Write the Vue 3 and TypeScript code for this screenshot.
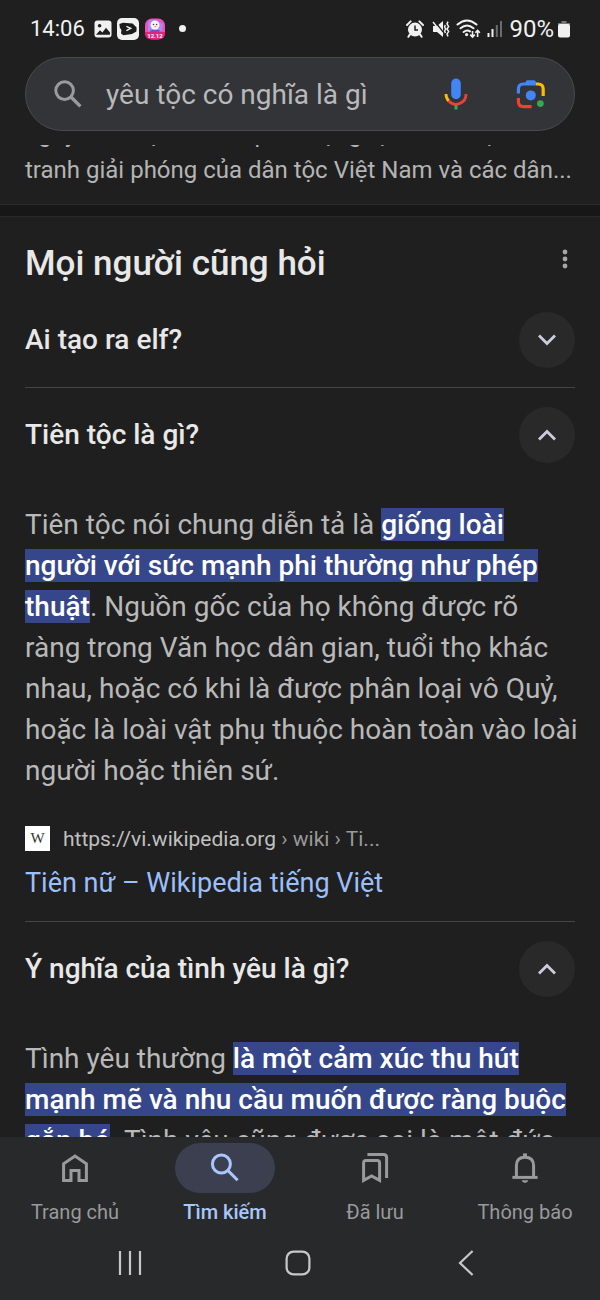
<script setup lang="ts">
import { ref } from 'vue'

interface Question {
  id: string
  title: string
  open: boolean
  before?: string
  highlight?: string
  after?: string
  source?: { host: string; path: string; label: string }
}

const query = ref('yêu tộc có nghĩa là gì')
const activeTab = ref('search')

const questions = ref<Question[]>([
  { id: 'elf', title: 'Ai tạo ra elf?', open: false },
  {
    id: 'tien-toc',
    title: 'Tiên tộc là gì?',
    open: true,
    before: 'Tiên tộc nói chung diễn tả là ',
    highlight: 'giống loài\nngười với sức mạnh phi thường như phép thuật',
    after:
      '. Nguồn gốc của họ không được rõ\nràng trong Văn học dân gian, tuổi thọ khác nhau, hoặc có khi là được phân loại vô Quỷ, hoặc là loài vật phụ thuộc hoàn toàn vào loài người hoặc thiên sứ.',
    source: {
      host: 'https://vi.wikipedia.org',
      path: ' › wiki › Ti...',
      label: 'Tiên nữ – Wikipedia tiếng Việt',
    },
  },
  {
    id: 'tinh-yeu',
    title: 'Ý nghĩa của tình yêu là gì?',
    open: true,
    before: 'Tình yêu thường ',
    highlight: 'là một cảm xúc thu hút mạnh mẽ và nhu cầu muốn được ràng buộc gắn bó',
    after: '. Tình yêu cũng được coi là một đức',
  },
])

const tabs = [
  { id: 'home', label: 'Trang chủ' },
  { id: 'search', label: 'Tìm kiếm' },
  { id: 'saved', label: 'Đã lưu' },
  { id: 'alerts', label: 'Thông báo' },
]
</script>

<template>
  <div class="screen">
    <header class="top">
      <div class="status">
        <div class="status-group">
          <span class="clock">14:06</span>
          <svg class="s-image" viewBox="0 0 18 18" aria-hidden="true">
            <rect x="0.5" y="0.5" width="17" height="17" rx="3" fill="#f1f1f1" />
            <circle cx="5.6" cy="5.8" r="1.8" fill="#1f1f1f" />
            <path d="M2 14.8 L6 10.2 L8.4 12.4 L12 7.8 L16 12.4 V14.8 Z" fill="#1f1f1f" />
          </svg>
          <svg class="s-app" viewBox="0 0 22 22" aria-hidden="true">
            <rect width="22" height="22" rx="5" fill="#f1f1f1" />
            <path d="M2.4 6 L6 4.8 L15.6 5.6 L19.6 9.4 L19.4 13.6 L15 16 L6.4 17.2 L4 15.4 L4.4 12 L2.8 9.6 Z" fill="#1c1c1c" />
            <path d="M9.4 8.4 L13.8 10.4 L9.4 12.6" fill="none" stroke="#f1f1f1" stroke-width="1.3" />
          </svg>
          <svg class="s-app" viewBox="0 0 22 22" aria-hidden="true">
            <rect x="1" y="0.5" width="20" height="21" rx="7" fill="#ef4fc0" />
            <path d="M4 4 Q7 1 11 2 T19 6 L18 13 H4 Z" fill="#a78df0" />
            <circle cx="11" cy="7" r="4.5" fill="#fbf3fb" />
            <circle cx="9.5" cy="6.5" r="0.8" fill="#463b70" />
            <circle cx="12.6" cy="6.5" r="0.8" fill="#463b70" />
            <path d="M10 8 L13 8 L11.4 9.5 Z" fill="#f39a32" />
            <path d="M6 12 H16 L15 14 H7 Z" fill="#6954c9" />
            <path d="M1 14 H21 V15 Q21 21.5 14 21.5 H8 Q1 21.5 1 15 Z" fill="#e3227f" />
            <text x="11" y="20" text-anchor="middle" font-size="6" font-weight="700" fill="#ffffff">12.12</text>
          </svg>
          <span class="dot"></span>
        </div>
        <div class="status-group right">
          <svg class="s-alarm" viewBox="0 0 18 18" aria-hidden="true">
            <circle cx="9" cy="9.6" r="7" fill="#f1f1f1" />
            <path d="M1 5 L4.6 1.4 M17 5 L13.4 1.4 M3.8 14.6 L2.4 16.8 M14.2 14.6 L15.6 16.8" stroke="#f1f1f1" stroke-width="2" stroke-linecap="round" />
            <path d="M9 5.6 V10 H12" fill="none" stroke="#1f1f1f" stroke-width="1.5" />
          </svg>
          <svg class="s-mute" viewBox="0 0 18 18" aria-hidden="true">
            <path d="M1 6 H5 L11 1 V17 L5 12 H1 Z" fill="#f1f1f1" />
            <path d="M2.4 1 L12.4 13.6" stroke="#1f1f1f" stroke-width="1.4" />
            <path d="M1 2 L11 14.6" stroke="#f1f1f1" stroke-width="1.5" />
            <path d="M13.2 5 L12.6 7 L13.6 9 L12.6 11 L13.4 13 M16 1.6 L15 4 L16.6 6.4 L15 9 L16.6 11.6 L15 14 L16 16.4" fill="none" stroke="#f1f1f1" stroke-width="1.5" />
          </svg>
          <svg class="s-wifi" viewBox="0 0 25 20" aria-hidden="true">
            <g fill="none" stroke="#f1f1f1" stroke-width="2" stroke-linecap="round">
              <path d="M1.5 5.5 Q11 -2.5 20.5 5.5" />
              <path d="M4.5 9.3 Q11 3.7 17.5 9.3" />
              <path d="M7.6 13 Q11 10.2 14 12.4" />
            </g>
            <circle cx="10.6" cy="15.6" r="1.6" fill="#f1f1f1" />
            <path d="M16.5 12 V17.6 M14.2 15.6 L16.5 18 L18.8 15.6 M21.6 18 V11.6 M19.3 13.8 L21.6 11.4 L23.9 13.8" fill="none" stroke="#f1f1f1" stroke-width="1.6" />
          </svg>
          <svg class="s-signal" viewBox="0 0 16 18" aria-hidden="true">
            <rect x="0.5" y="13" width="2" height="4" fill="#f1f1f1" />
            <rect x="4.5" y="9" width="2" height="8" fill="#f1f1f1" />
            <rect x="8.8" y="5" width="2" height="12" fill="#6c6c6c" />
            <rect x="13" y="1" width="2" height="16" fill="#6c6c6c" />
          </svg>
          <span class="percent">90%</span>
          <svg class="s-battery" viewBox="0 0 12 18" aria-hidden="true">
            <path d="M3.5 1 H8.5 V3 H12 V5 H0 V3 H3.5 Z" fill="#777777" />
            <rect y="4" width="12" height="13.5" rx="2" fill="#f1f1f1" />
          </svg>
        </div>
      </div>

      <form class="search" @submit.prevent>
        <svg class="glass" viewBox="0 0 28 28" fill="none" stroke="#9b9b9b" aria-hidden="true">
          <circle cx="10.6" cy="10.6" r="8.8" stroke-width="3" />
          <path d="M17 17 L26.4 26.4" stroke-width="3.4" />
        </svg>
        <input v-model="query" type="text" aria-label="Tìm kiếm" />
        <button type="button" class="icon-button" aria-label="Tìm kiếm bằng giọng nói">
          <svg class="mic" viewBox="0 0 24 32" aria-hidden="true">
            <path d="M2 16 A10 10 0 0 0 4.7 23" fill="none" stroke="#fbbc04" stroke-width="2.8" />
            <path d="M4.7 23 A10 10 0 0 0 22 16" fill="none" stroke="#ea4335" stroke-width="2.8" />
            <path d="M12 27 V31.5" stroke="#34a853" stroke-width="3" />
            <rect x="7.2" y="0.6" width="9.6" height="20.6" rx="4.8" fill="#4285f4" />
          </svg>
        </button>
        <button type="button" class="icon-button" aria-label="Tìm kiếm bằng hình ảnh">
          <svg class="lens" viewBox="0 0 30 30" fill="none" aria-hidden="true">
            <path d="M2.4 14.5 V10 Q2.4 5 7.4 5 H20" stroke="#4285f4" stroke-width="3.2" />
            <path d="M8.5 5 L10.8 1.2 H18.8 L21.2 5 Z" fill="#4285f4" />
            <path d="M20 5 H22 Q27.2 5 27.2 10 V17" stroke="#fbbc04" stroke-width="3.2" />
            <path d="M2.4 19 V22.5 Q2.4 27.6 7.4 27.6 H15.6" stroke="#ea4335" stroke-width="3.2" />
            <circle cx="14.8" cy="16.4" r="5" fill="#4285f4" />
            <circle cx="24.4" cy="24.6" r="3.4" fill="#34a853" />
          </svg>
        </button>
      </form>
    </header>

    <main class="results">
      <p class="snippet">nguyên nhuận thành quan trọng vị thế mới lại đấu<br />tranh giải phóng của dân tộc Việt Nam và các dân...</p>

      <section class="related">
        <div class="heading">
          <h2>Mọi người cũng hỏi</h2>
          <button type="button" class="more" aria-label="Tùy chọn khác">
            <svg viewBox="0 0 6 20" fill="#a6a6a6" aria-hidden="true">
              <circle cx="3" cy="3" r="2.4" />
              <circle cx="3" cy="10" r="2.4" />
              <circle cx="3" cy="17" r="2.4" />
            </svg>
          </button>
        </div>

        <article v-for="q in questions" :key="q.id" class="item">
          <div class="question">
            <h3>{{ q.title }}</h3>
            <button type="button" class="toggle" :aria-expanded="q.open" :aria-label="q.title" @click="q.open = !q.open">
              <svg viewBox="0 0 20 12" fill="none" stroke="#ccccdc" stroke-width="2.8" aria-hidden="true">
                <path v-if="q.open" d="M2 10.4 L10 2.4 L18 10.4" />
                <path v-else d="M2 1.6 L10 9.6 L18 1.6" />
              </svg>
            </button>
          </div>
          <div v-if="q.open && q.before" class="answer">
            <p>{{ q.before }}<mark>{{ q.highlight }}</mark>{{ q.after }}</p>
            <template v-if="q.source">
              <div class="source">
                <span class="favicon">W</span>
                <span class="url">{{ q.source.host }}<span class="path">{{ q.source.path }}</span></span>
              </div>
              <a class="link" href="#">{{ q.source.label }}</a>
            </template>
          </div>
        </article>
      </section>
    </main>

    <footer class="bottom">
      <nav class="tabs">
        <button
          v-for="tab in tabs"
          :key="tab.id"
          type="button"
          class="tab"
          :class="{ active: tab.id === activeTab }"
          @click="activeTab = tab.id"
        >
          <span class="pill">
            <svg viewBox="0 0 32 32" fill="none" stroke="currentColor" stroke-width="3" aria-hidden="true">
              <path v-if="tab.id === 'home'" d="M4.6 28.6 V11.8 L16 4 L27.4 11.8 V28.6 H20 V18.6 H12 V28.6 Z" />
              <g v-else-if="tab.id === 'search'">
                <circle cx="12.4" cy="12" r="9" />
                <path d="M18.8 18.4 L28.6 28.2" />
              </g>
              <g v-else-if="tab.id === 'saved'">
                <path d="M4.6 28.4 V11 Q4.6 8.6 7 8.6 H18.2 Q20.6 8.6 20.6 11 V28.4 L12.6 24 Z" />
                <path d="M8.4 2.6 H24.6 Q27.6 2.6 27.6 5.6 V26" />
              </g>
              <g v-else>
                <path d="M3.4 25.4 H28.6" />
                <path d="M7.4 25.4 V13.6 Q7.4 5.2 16 5.2 Q24.6 5.2 24.6 13.6 V25.4" />
                <path d="M16 1.4 V5" stroke-width="4" />
                <path d="M12.6 28.2 H19.4 Q18.6 31 16 31 Q13.4 31 12.6 28.2 Z" fill="currentColor" stroke="none" />
              </g>
            </svg>
          </span>
          <span class="tab-label">{{ tab.label }}</span>
        </button>
      </nav>
      <div class="system">
        <button type="button" aria-label="Gần đây">
          <svg viewBox="0 0 28 28" fill="none" stroke="#c8c8c8" stroke-width="2.2" aria-hidden="true">
            <path d="M4 2 V26 M14 2 V26 M24 2 V26" />
          </svg>
        </button>
        <button type="button" aria-label="Màn hình chính">
          <svg viewBox="0 0 28 28" fill="none" stroke="#c8c8c8" stroke-width="2.2" aria-hidden="true">
            <rect x="2.6" y="2.6" width="22.8" height="22.8" rx="7" />
          </svg>
        </button>
        <button type="button" aria-label="Quay lại">
          <svg viewBox="0 0 28 28" fill="none" stroke="#c8c8c8" stroke-width="2.2" aria-hidden="true">
            <path d="M20.6 2 L8 14 L20.6 26" />
          </svg>
        </button>
      </div>
    </footer>
  </div>
</template>

<style>
body {
  background: #1f1f1f;
}
</style>

<style scoped>
.screen {
  display: flex;
  flex-direction: column;
  height: 100vh;
  overflow: hidden;
  background: #1f1f1f;
  color: #e8e8e8;
  font-family: Roboto, "Noto Sans", sans-serif;
}

button {
  display: flex;
  align-items: center;
  justify-content: center;
  padding: 0;
  border: 0;
  background: none;
  color: inherit;
  font: inherit;
}

.top {
  position: relative;
  z-index: 1;
  flex: none;
  padding-bottom: 14px;
  background: #1f1f1f;
}

.status {
  display: flex;
  align-items: center;
  justify-content: space-between;
  height: 57px;
  padding: 0 30px;
  color: #f1f1f1;
  font-size: 22px;
}

.status-group {
  display: flex;
  align-items: center;
  gap: 5px;
}

.clock {
  margin-right: 4px;
}

.s-image {
  width: 18px;
  height: 18px;
}

.s-app {
  width: 22px;
  height: 22px;
}

.dot {
  width: 7px;
  height: 7px;
  margin-left: 8px;
  border-radius: 50%;
  background: #f1f1f1;
}

.right {
  gap: 6px;
}

.s-alarm,
.s-mute {
  width: 18px;
  height: 18px;
}

.s-mute {
  margin-left: 2px;
}

.s-wifi {
  width: 25px;
  height: 20px;
}

.s-signal {
  width: 16px;
  height: 18px;
}

.s-battery {
  width: 12px;
  height: 18px;
}

.percent {
  margin-right: -2px;
  font-size: 24px;
}

.search {
  display: flex;
  align-items: center;
  height: 72px;
  margin: 0 25px;
  padding: 0 21px 0 28px;
  border: 1px solid #4a4a4c;
  border-radius: 38px;
  background: #333438;
}

.glass {
  flex: none;
  width: 28px;
  height: 28px;
}

.search input {
  flex: 1;
  min-width: 0;
  padding: 0 0 0 24px;
  border: 0;
  outline: 0;
  background: none;
  color: #b9b9bb;
  font: inherit;
  font-size: 28px;
}

.icon-button {
  width: 44px;
  height: 44px;
}

.icon-button + .icon-button {
  margin-left: 31px;
}

.mic {
  width: 24px;
  height: 32px;
}

.lens {
  width: 30px;
  height: 30px;
}

.results {
  flex: 1;
  min-height: 0;
  margin-top: -29px;
  overflow: hidden;
}

.snippet {
  margin: 0;
  padding: 0 25px 17px;
  color: #b4b4b4;
  font-size: 24px;
  line-height: 36px;
  white-space: nowrap;
}

.related {
  padding: 24px 25px 0;
  border-top: 11px solid #171717;
  box-shadow: 0 -1px #2b2b2b, inset 0 1px #292929;
}

.heading {
  display: flex;
  justify-content: space-between;
}

h2,
h3 {
  margin: 0;
  font-weight: 500;
}

h2 {
  font-size: 35px;
  line-height: 48px;
}

.more {
  width: 20px;
  height: 38px;
}

.more svg {
  width: 6px;
  height: 20px;
}

.heading + .item {
  padding-top: 5px;
}

.item + .item {
  border-top: 1px solid #444444;
}

.question {
  display: flex;
  align-items: center;
  justify-content: space-between;
  padding: 19px 0;
}

h3 {
  font-size: 28px;
  line-height: 40px;
}

.toggle {
  flex: none;
  width: 56px;
  height: 56px;
  border-radius: 50%;
  background: #292929;
}

.toggle svg {
  width: 20px;
  height: 12px;
}

.answer {
  margin-right: -10px;
  padding: 22px 0 18px;
}

.answer p {
  margin: 0 0 35px;
  color: #b9b9b9;
  font-size: 28px;
  line-height: 41px;
  white-space: pre-line;
}

mark {
  background: #35478a;
  color: #ffffff;
  font-weight: 500;
}

.source {
  display: flex;
  align-items: center;
  gap: 13px;
}

.favicon {
  width: 25px;
  background: #ffffff;
  color: #333333;
  font-family: "Liberation Serif", serif;
  font-size: 15px;
  line-height: 25px;
  text-align: center;
}

.url {
  color: #c0c0c0;
  font-size: 21px;
  line-height: 24px;
}

.path {
  color: #999999;
}

.link {
  display: block;
  margin-top: 12px;
  color: #9bbffa;
  font-size: 27px;
  line-height: 40px;
  text-decoration: none;
}

.bottom {
  position: relative;
  flex: none;
  background: #28292a;
}

.tabs {
  display: grid;
  grid-template-columns: repeat(4, 1fr);
  padding-top: 6px;
}

.tab {
  flex-direction: column;
  gap: 5px;
  color: #999a9b;
  font-size: 20px;
  line-height: 28px;
}

.pill {
  display: flex;
  align-items: center;
  justify-content: center;
  width: 100px;
  height: 50px;
  border-radius: 25px;
}

.pill svg {
  width: 32px;
  height: 32px;
}

.active {
  color: #a8c7fa;
}

.active .pill {
  background: #3c3f50;
}

.active .tab-label {
  font-weight: 500;
}

.system {
  display: grid;
  grid-template-columns: repeat(3, 1fr);
  align-items: center;
  height: 74px;
  padding: 0 50px 0 46px;
}

.system svg {
  width: 28px;
  height: 28px;
}
</style>
